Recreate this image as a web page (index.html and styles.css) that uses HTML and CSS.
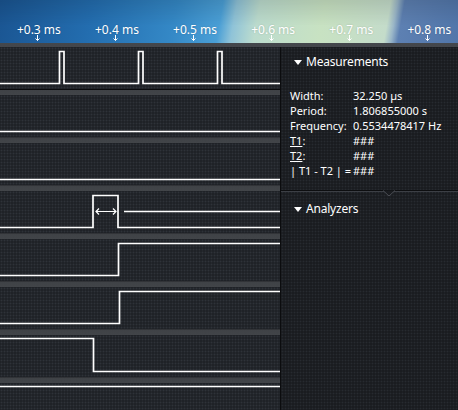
FILE: index.html
```html
<!doctype html>
<html>
<head>
  <meta charset="utf-8">
  <title>Logic capture</title>
  <link rel="stylesheet" href="styles.css">
</head>
<body>

  <div class="timeline">
    <div class="ticks">
      <div class="tick"><span>+0.3 ms</span><svg width="5" height="6" viewBox="0 0 5 6"><path d="M2.5 0V5.5M0.5 3.5L2.5 5.5L4.5 3.5" /></svg></div>
      <div class="tick"><span>+0.4 ms</span><svg width="5" height="6" viewBox="0 0 5 6"><path d="M2.5 0V5.5M0.5 3.5L2.5 5.5L4.5 3.5" /></svg></div>
      <div class="tick"><span>+0.5 ms</span><svg width="5" height="6" viewBox="0 0 5 6"><path d="M2.5 0V5.5M0.5 3.5L2.5 5.5L4.5 3.5" /></svg></div>
      <div class="tick"><span>+0.6 ms</span><svg width="5" height="6" viewBox="0 0 5 6"><path d="M2.5 0V5.5M0.5 3.5L2.5 5.5L4.5 3.5" /></svg></div>
      <div class="tick"><span>+0.7 ms</span><svg width="5" height="6" viewBox="0 0 5 6"><path d="M2.5 0V5.5M0.5 3.5L2.5 5.5L4.5 3.5" /></svg></div>
      <div class="tick"><span>+0.8 ms</span><svg width="5" height="6" viewBox="0 0 5 6"><path d="M2.5 0V5.5M0.5 3.5L2.5 5.5L4.5 3.5" /></svg></div>
    </div>
  </div>

  <div class="main">
    <div class="channels">
      <div class="channel">
        <svg class="trace" viewBox="0 0 280 42"><polyline points="0,36.5 59.5,36.5 59.5,4.5 64,4.5 64,36.5 138.5,36.5 138.5,4.5 143,4.5 143,36.5 217.5,36.5 217.5,4.5 222,4.5 222,36.5 280,36.5" /></svg>
      </div>
      <div class="channel">
        <svg class="trace" viewBox="0 0 280 42"><polyline points="0,36.5 280,36.5" /></svg>
      </div>
      <div class="channel">
        <svg class="trace" viewBox="0 0 280 42"><polyline points="0,36.5 280,36.5" /></svg>
      </div>
      <div class="channel">
        <svg class="trace" viewBox="0 0 280 42">
          <polyline points="0,36.5 93,36.5 93,4.5 118,4.5 118,36.5 280,36.5" />
          <polyline points="124,20.5 280,20.5" />
          <path class="marker" d="M96 20.5H116M99 17.5L96 20.5L99 23.5M113 17.5L116 20.5L113 23.5" />
        </svg>
      </div>
      <div class="channel">
        <svg class="trace" viewBox="0 0 280 42"><polyline points="0,36.5 118.5,36.5 118.5,4.5 280,4.5" /></svg>
      </div>
      <div class="channel">
        <svg class="trace" viewBox="0 0 280 42"><polyline points="0,36.5 119.5,36.5 119.5,4.5 280,4.5" /></svg>
      </div>
      <div class="channel">
        <svg class="trace" viewBox="0 0 280 42"><polyline points="0,3.5 93.5,3.5 93.5,36.5 280,36.5" /></svg>
      </div>
      <div class="channel">
        <svg class="trace" viewBox="0 0 280 42"><polyline points="0,3.5 280,3.5" /></svg>
      </div>
    </div>

    <div class="sidebar">
      <div class="section">
        <div class="section-title"><span class="caret"></span>Measurements</div>
        <table class="measures">
          <tr><td>Width:</td><td>32.250 µs</td></tr>
          <tr><td>Period:</td><td>1.806855000 s</td></tr>
          <tr><td>Frequency:</td><td>0.5534478417 Hz</td></tr>
          <tr><td><u>T1</u>:</td><td>###</td></tr>
          <tr><td><u>T2</u>:</td><td>###</td></tr>
          <tr><td>| T1 - T2 | =</td><td>###</td></tr>
        </table>
      </div>
      <div class="divider">
        <svg width="12" height="7" viewBox="0 0 12 7"><path d="M0 0.5L6 6L12 0.5" /></svg>
      </div>
      <div class="section section-lower">
        <div class="section-title"><span class="caret"></span>Analyzers</div>
      </div>
    </div>
  </div>

</body>
</html>
```

FILE: styles.css
```css
html, body {
  margin: 0;
  padding: 0;
}

body {
  width: 458px;
  height: 410px;
  overflow: hidden;
  background: #1e2126;
  font-family: "Noto Sans", "Open Sans", sans-serif;
  color: #fff;
}

.timeline {
  height: 43px;
  background:
    linear-gradient(180deg, rgba(0,0,0,0.12) 0%, rgba(255,255,255,0) 60%),
    linear-gradient(100deg, #1a5592 0%, #236daf 20%, #3488c6 38%, #4a9fd6 48%, #8fc3d8 51%, #bcdcce 56%, #c8e2c2 70%, #c4dcca 84%, #9ab6c8 85.5%, #5d80b2 87%, #5176aa 100%);
  border-bottom: 4px solid #55585d;
  border-image: linear-gradient(180deg, #7a7d82, #43464b) 1;
  overflow: hidden;
}

.ticks {
  display: flex;
  margin-left: -1.7px;
  padding-top: 22px;
}

.tick {
  width: 78.1px;
  flex: none;
  display: flex;
  flex-direction: column;
  align-items: center;
}

.tick span {
  font-size: 12px;
  line-height: 15px;
  white-space: nowrap;
  margin-left: 3px;
  color: #fff;
  text-shadow: 0 0 2px rgba(0,0,0,0.2);
}

.tick svg {
  display: block;
  margin-top: -2px;
}

.tick path {
  fill: none;
  stroke: #fff;
  stroke-width: 1;
}

.main {
  display: flex;
}

.channels {
  width: 280px;
  flex: none;
}

.channel {
  height: 42px;
  border-bottom: 1px solid #0b0c0e;
  background:
    radial-gradient(circle, #2e3239 0.8px, transparent 1.1px) 0 0 / 3px 3px,
    #1f2227;
}

.channel + .channel {
  border-top: 5px solid #55585d;
  border-image: linear-gradient(180deg, #3f4246 0%, #6e7175 40%, #56595d 70%, #303236 100%) 1;
}

.trace {
  display: block;
  width: 280px;
  height: 42px;
}

.trace polyline,
.trace path {
  fill: none;
  stroke: #fff;
  stroke-width: 1.7;
}

.trace .marker {
  stroke-width: 1.2;
}

.sidebar {
  flex: 1;
  height: 363px;
  border-left: 1px solid #0b0c0e;
  background:
    radial-gradient(circle, #272a30 0.8px, transparent 1.1px) 0 0 / 3px 3px,
    #1a1c20;
}

.section {
  padding: 7px 0 0 9px;
}

.section-lower {
  padding-top: 9px;
}

.section-title {
  font-size: 12px;
  line-height: 16px;
  letter-spacing: -0.2px;
  display: flex;
  align-items: center;
}

.caret {
  width: 0;
  height: 0;
  border-left: 4px solid transparent;
  border-right: 4px solid transparent;
  border-top: 5px solid #fff;
  margin: 0 4px 0 4px;
}

.measures {
  border-collapse: collapse;
  margin-top: 18px;
  font-size: 11px;
}

.measures td {
  padding: 0;
  line-height: 15px;
  white-space: nowrap;
}

.measures td:first-child {
  width: 63px;
}

.divider {
  margin-top: 12px;
  height: 1px;
  background: #3c3f45;
  border-top: 1px solid #0d0e10;
  position: relative;
}

.divider svg {
  position: absolute;
  left: 102px;
  top: -1px;
}

.divider path {
  fill: #1a1c20;
  stroke: #4a4d53;
  stroke-width: 1;
}
```
